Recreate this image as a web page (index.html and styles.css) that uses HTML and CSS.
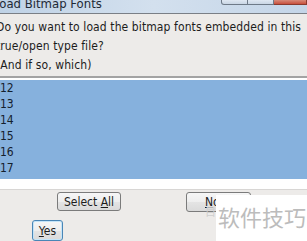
FILE: index.html
```html
<!DOCTYPE html>
<html lang="en">
<head>
    <meta charset="UTF-8">
    <meta name="viewport" content="width=device-width, initial-scale=1.0">
    <title>Load Bitmap Fonts</title>
    <link rel="stylesheet" href="styles.css">
</head>
<body>
    <div class="dialog">
        <!-- Title bar -->
        <div class="titlebar">
            <span class="title">Load Bitmap Fonts</span>
            <div class="controls">
                <span class="ctl"></span>
                <span class="ctl"></span>
                <span class="ctl close"></span>
            </div>
        </div>

        <!-- Question -->
        <div class="message">
            <p>Do you want to load the bitmap fonts embedded in this</p>
            <p>true/open type file?</p>
            <p>(And if so, which)</p>
        </div>

        <!-- Strike list -->
        <div class="list">
            <div class="selected">
                <div class="row">12</div>
                <div class="row">13</div>
                <div class="row">14</div>
                <div class="row">15</div>
                <div class="row">16</div>
                <div class="row">17</div>
            </div>
        </div>

        <!-- Buttons -->
        <div class="buttons">
            <div class="btn-row first">
                <button class="btn select-all">Select <u>A</u>ll</button>
                <button class="btn none"><u>N</u>one</button>
            </div>
            <div class="btn-row second">
                <button class="btn yes default"><u>Y</u>es</button>
            </div>
        </div>
    </div>

    <!-- watermark overlay -->
    <div class="watermark">
        <span class="wm-logo">目</span>
        <span class="wm-text">软件技巧</span>
    </div>
</body>
</html>
```

FILE: styles.css
```css
body {
    margin: 0;
    padding: 0;
    width: 307px;
    height: 241px;
    overflow: hidden;
    background-color: #edebe9;
    font-family: "DejaVu Sans Condensed", "DejaVu Sans", sans-serif;
    font-size: 12px;
    color: #1c1c1c;
    position: relative;
}
.titlebar {
    height: 13px;
    display: flex;
    align-items: flex-end;
    background: linear-gradient(to right, #bfd2e6, #d3e0ee 50%, #c4d5e8);
    border-bottom: 1px solid #7a7f86;
    overflow: hidden;
}
.title {
    font-size: 13px;
    line-height: 13px;
    margin-left: -7px;
    margin-bottom: 3px;
    color: #1e2a36;
}
.controls {
    margin-left: auto;
    align-self: flex-start;
    display: flex;
    height: 5px;
}
.ctl {
    width: 25px;
    height: 4px;
    border: 1px solid #6e7a88;
    border-top: none;
    background: linear-gradient(#dfe8f2, #c9d6e4);
}
.ctl + .ctl {
    border-left: none;
}
.ctl:first-child {
    border-radius: 0 0 0 3px;
}
.close {
    width: 32px;
    background: linear-gradient(#d78a79, #c8503d);
    border-color: #8a3a2e;
}
.message {
    padding-top: 4px;
}
.message p {
    margin: 0;
    line-height: 19px;
    text-indent: -4px;
    letter-spacing: 0.1px;
}
.list {
    margin-top: 1px;
    border-top: 2px solid #a3a3a3;
    background: #fff;
    padding: 2px 0 10px;
    border-bottom: 1px solid #d8d6d4;
}
.selected {
    background-color: #86b1dd;
    padding-bottom: 3px;
}
.row {
    height: 16px;
    line-height: 17px;
    color: #14202c;
}
.buttons {
    padding-top: 2px;
}
.btn-row {
    display: flex;
}
.first {
    padding-left: 57px;
    gap: 65px;
}
.second {
    padding-left: 32px;
    margin-top: 8px;
}
.btn {
    font-family: inherit;
    font-size: 12px;
    color: #1c1c1c;
    height: 19px;
    padding: 0;
    border: 1px solid #7b7b7b;
    border-radius: 3px;
    background: linear-gradient(#f6f6f6, #eeeeee 50%, #e4e4e4 51%, #dadada);
}
.select-all {
    width: 64px;
}
.none {
    width: 65px;
    text-align: left;
    padding-left: 18px;
    height: 20px;
}
.yes {
    width: 31px;
    height: 21px;
}
.default {
    border-color: #4a86b6;
    box-shadow: inset 0 0 0 1px #c4e4f8;
}
.watermark {
    position: absolute;
    left: 205px;
    top: 195px;
    display: flex;
    align-items: flex-start;
}
.wm-logo {
    font-family: "Noto Sans CJK SC", sans-serif;
    font-size: 11px;
    color: #cfcfcf;
    margin-top: 8px;
}
.wm-text {
    background: #fff;
    width: 92px;
    height: 46px;
    font-family: "Noto Sans CJK SC", sans-serif;
    font-size: 22px;
    line-height: 26px;
    color: #bcbcbc;
    padding: 8px 0 0 2px;
    box-sizing: border-box;
}
```
